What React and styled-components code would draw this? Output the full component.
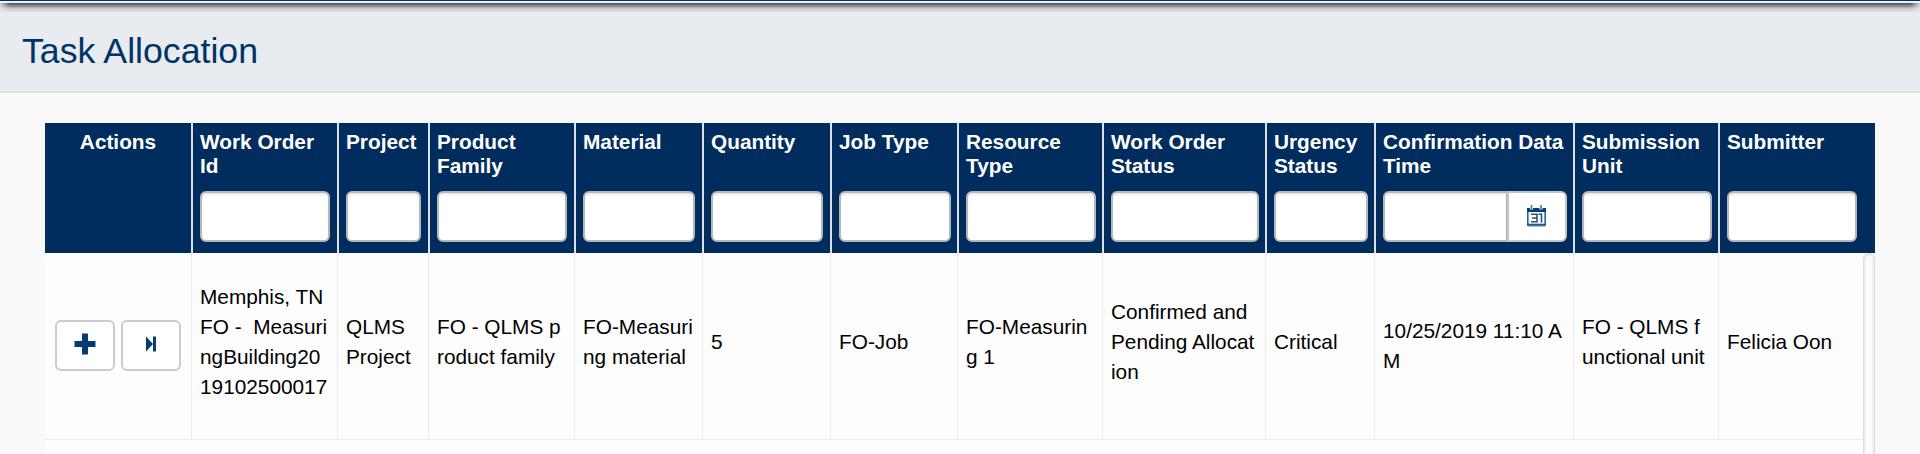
import React from "react";
import styled, { createGlobalStyle } from "styled-components";

const Global = createGlobalStyle`
  * { box-sizing: border-box; }
  html, body { margin: 0; overflow: hidden; }
  body {
    background: #f9f9f9;
    color: #000;
    font: 20.8px/30px "Liberation Sans", Arial, sans-serif;
  }
`;

const Page = styled.div`
  height: 454px;
  overflow: hidden;
`;

const TopStrip = styled.div`
  position: relative;
  height: 3px;
  background: #eef0f3;
  border-top: 1px solid #003366;

  &::after {
    content: "";
    position: absolute;
    top: 2px;
    left: 0;
    right: 0;
    height: 10px;
    background: linear-gradient(
      rgba(0, 0, 0, 0.68),
      rgba(0, 0, 0, 0.4) 30%,
      rgba(0, 0, 0, 0.12) 60%,
      rgba(0, 0, 0, 0)
    );
    mask-image: linear-gradient(90deg, rgba(0, 0, 0, 0.2), #000 10px, #000 calc(100% - 10px), rgba(0, 0, 0, 0.2));
  }
`;

const TitleBar = styled.header`
  height: 90px;
  padding: 23px 22px 0;
  background: #e8ebf0;
  border-bottom: 2px solid #dce0e7;
`;

const Title = styled.h1`
  margin: 0;
  color: #003366;
  font-size: 35.7px;
  font-weight: 400;
  line-height: 50px;
`;

const Grid = styled.section`
  width: 1830px;
  margin: 30px 0 0 45px;
`;

const HeaderRow = styled.div`
  display: flex;
  height: 130px;
  background: #002d5d;
`;

const HeaderCell = styled.div`
  display: flex;
  flex-direction: column;
  flex: none;
  width: ${(p) => p.$width}px;
  padding: 7px ${(p) => (p.$wide ? 6 : 7)}px 0 7px;
  border-right: ${(p) => (p.$last ? "0" : "2px solid #dcdfe4")};
  text-align: ${(p) => (p.$center ? "center" : "left")};
`;

const Label = styled.div`
  height: 61px;
  color: #fff;
  font-weight: 700;
  line-height: 24px;
  white-space: pre;
`;

const Field = styled.input`
  display: block;
  width: 100%;
  min-width: 0;
  height: 51px;
  margin: 0;
  padding: 0 8px;
  border: 2px solid #b6b7b9;
  border-radius: ${(p) => (p.$joined ? "6px 0 0 6px" : "6px")};
  border-right-width: ${(p) => (p.$joined ? 1 : 2)}px;
  background: #fff;
  box-shadow: inset 0 2px 2px rgba(0, 0, 0, 0.08);
  font: inherit;
`;

const DateGroup = styled.div`
  display: flex;
`;

const DateButton = styled.button`
  display: flex;
  align-items: center;
  justify-content: center;
  flex: none;
  width: 60px;
  height: 51px;
  padding: 0 1px 2px 0;
  border: 2px solid #c4c5c7;
  border-radius: 0 6px 6px 0;
  background: #fff;
`;

const Body = styled.div`
  display: flex;
  height: 201px;
  background: #fdfdfd;
`;

const Row = styled.div`
  display: flex;
  width: 1818px;
  height: 187px;
  border-bottom: 1px solid #ebebeb;
`;

const Cell = styled.div`
  display: flex;
  align-items: center;
  flex: none;
  width: ${(p) => p.$width}px;
  padding: 0 0 ${(p) => (p.$low ? 0 : 9)}px 8px;
  border-left: 1px solid #ebebeb;
  white-space: pre;
`;

const ActionCell = styled.div`
  display: flex;
  align-items: center;
  gap: 6px;
  flex: none;
  width: 146px;
  padding: 0 0 1px 10px;
`;

const ActionButton = styled.button`
  display: flex;
  align-items: center;
  justify-content: center;
  width: 60px;
  height: 51px;
  padding: 0 0 3px;
  border: 2px solid #ccc;
  border-radius: 6px;
  background: #fff;
`;

const Scrollbar = styled.div`
  width: 12px;
  height: 230px;
  border: 1px solid #dedede;
  border-radius: 6px;
  background: #fcfcfc;
  box-shadow: inset 0 0 3px rgba(0, 0, 0, 0.2);
`;

const columns = [
  { label: "Work Order\nId", width: 146, value: "Memphis, TN\nFO -  Measuri\nngBuilding20\n19102500017" },
  { label: "Project", width: 91, value: "QLMS\nProject" },
  { label: "Product\nFamily", width: 146, value: "FO - QLMS p\nroduct family" },
  { label: "Material", width: 128, value: "FO-Measuri\nng material" },
  { label: "Quantity", width: 128, value: "5" },
  { label: "Job Type", width: 127, value: "FO-Job", wide: true },
  { label: "Resource\nType", width: 145, value: "FO-Measurin\ng 1", wide: true },
  { label: "Work Order\nStatus", width: 163, value: "Confirmed and\nPending Allocat\nion", wide: true },
  { label: "Urgency\nStatus", width: 109, value: "Critical", wide: true },
  { label: "Confirmation Data\nTime", width: 199, value: "10/25/2019 11:10 A\nM", date: true, wide: true },
  { label: "Submission\nUnit", width: 145, value: "FO - QLMS f\nunctional unit", wide: true },
  { label: "Submitter", width: 144, value: "Felicia Oon" },
];

const CalendarIcon = () => (
  <svg width="19" height="22" viewBox="0 0 19 22" fill="none">
    <path d="M0.8 5v15h17.4V5" stroke="#1c6a9f" strokeWidth="1.6" />
    <path d="M0 3h19v4H0z" fill="#003f73" />
    <path d="M4.5 0v4.5M14 0v4.5" stroke="#fff" strokeWidth="3.2" />
    <path d="M4.5 0v4.5M14 0v4.5" stroke="#4886aa" strokeWidth="1.8" />
    <path d="M4 9.2h6v7.6H4M5 13h5M11.5 9.2h3v8.4" stroke="#24577d" strokeWidth="1.6" />
    <path d="M0 19.6h19" stroke="#24577d" strokeWidth="1.8" />
    <path d="M1 21.4h17" stroke="#a9b4bb" />
  </svg>
);

const PlusIcon = () => (
  <svg width="22" height="22" viewBox="0 0 22 22">
    <path d="M8 0.5h6v7.5h7.5v6H14v7.5H8V14H0.5V8H8z" fill="#053c71" />
  </svg>
);

const SkipIcon = () => (
  <svg width="12" height="16" viewBox="0 0 12 16">
    <path d="M1 0.5L8 8l-7 7.5zM8 0.5h3v15H8z" fill="#053c71" />
  </svg>
);

export default function App() {
  return (
    <Page>
      <Global />
      <TopStrip />
      <TitleBar>
        <Title>Task Allocation</Title>
      </TitleBar>
      <Grid>
        <HeaderRow>
          <HeaderCell $width={148} $center>
            <Label>Actions</Label>
          </HeaderCell>
          {columns.map((c, i) => (
            <HeaderCell
              key={c.label}
              $width={c.width}
              $wide={c.wide}
              $last={i === columns.length - 1}
            >
              <Label>{c.label}</Label>
              {c.date ? (
                <DateGroup>
                  <Field $joined aria-label={c.label} />
                  <DateButton aria-label="Pick a date"><CalendarIcon /></DateButton>
                </DateGroup>
              ) : (
                <Field aria-label={c.label} />
              )}
            </HeaderCell>
          ))}
        </HeaderRow>
        <Body>
          <Row>
            <ActionCell>
              <ActionButton aria-label="Add"><PlusIcon /></ActionButton>
              <ActionButton aria-label="Skip to end"><SkipIcon /></ActionButton>
            </ActionCell>
            {columns.map((c) => (
              <Cell key={c.label} $width={c.width} $low={c.date}>{c.value}</Cell>
            ))}
          </Row>
          <Scrollbar />
        </Body>
      </Grid>
    </Page>
  );
}
